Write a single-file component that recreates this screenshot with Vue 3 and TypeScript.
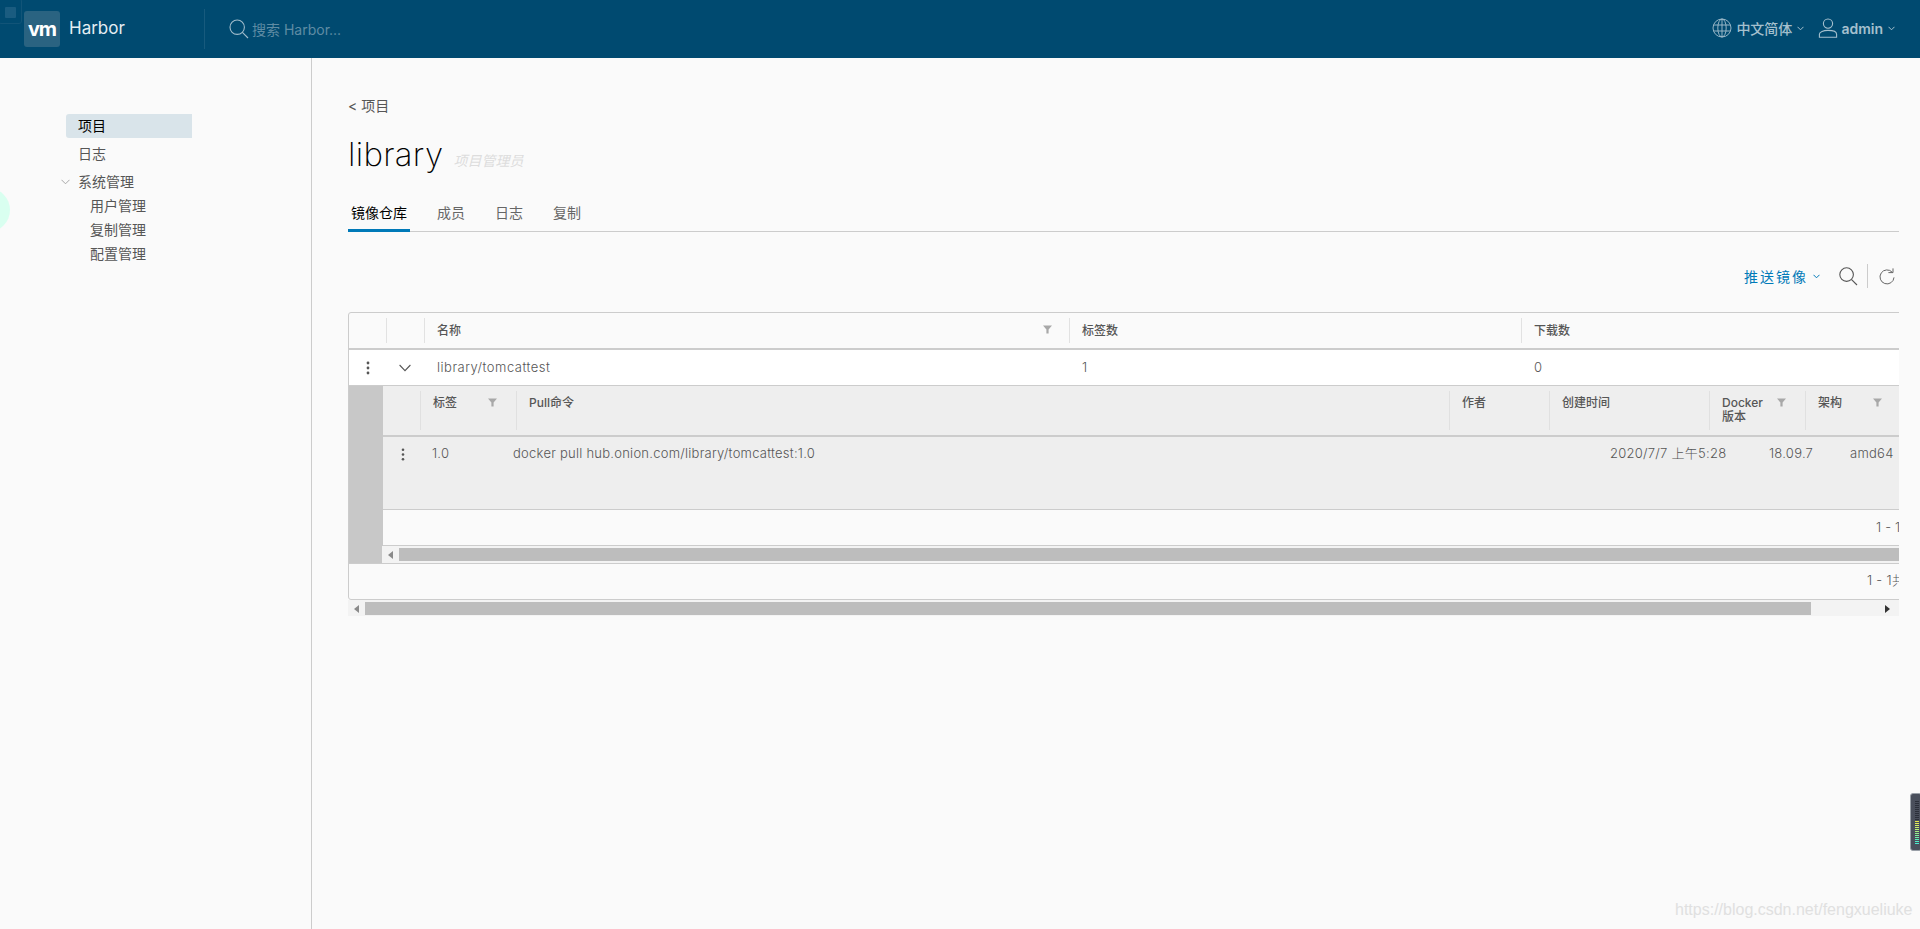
<script setup lang="ts">
interface Col { label: string; filter?: boolean }

const outerHead: Col[] = [
  { label: '' },
  { label: '' },
  { label: '名称', filter: true },
  { label: '标签数' },
  { label: '下载数' },
]
const outerRow = ['library/tomcattest', '1', '0']
const innerHead: Col[] = [
  { label: '' },
  { label: '标签', filter: true },
  { label: 'Pull命令' },
  { label: '作者' },
  { label: '创建时间' },
  { label: 'Docker 版本', filter: true },
  { label: '架构', filter: true },
]
const innerRow = ['1.0', 'docker pull hub.onion.com/library/tomcattest:1.0', '2020/7/7 上午5:28', '18.09.7', 'amd64']

const meterColors: string[] = [
  ...Array(10).fill('#2b2f3a'),
  '#e8e84a', '#e4ea58', '#d6ec62', '#c8ee6c', '#b8f076', '#a6f080', '#94f08c', '#82f09a', '#70f0a8', '#5eeeb6', '#50ecc4', '#48ead0',
]
</script>

<template>
  <div class="page">
    <header class="topbar">
      <div class="brand">
        <span class="logo">vm</span>
        <span class="brand-name">Harbor</span>
      </div>
      <div class="search">
        <svg class="search-icon" width="20" height="20" viewBox="0 0 20 20" fill="none" stroke="currentColor" stroke-width="1.1">
          <circle cx="8.2" cy="8.2" r="7.2" />
          <path d="M13.4 13.4 L19 19" />
        </svg>
        <span class="placeholder">搜索 Harbor...</span>
      </div>
      <div class="top-right">
        <div class="top-item">
          <svg width="20" height="20" viewBox="0 0 20 20" fill="none" stroke="currentColor" stroke-width="0.9">
            <circle cx="10" cy="10" r="9" />
            <ellipse cx="10" cy="10" rx="4.2" ry="9" />
            <path d="M10 1 V19 M1.6 7 H18.4 M1.6 13 H18.4" />
          </svg>
          <span class="top-label lang">中文简体</span>
          <svg class="caret" width="7" height="5" viewBox="0 0 7 5" fill="none" stroke="currentColor" stroke-width="1"><path d="M0.5 0.8 L3.5 3.8 L6.5 0.8" /></svg>
        </div>
        <div class="top-item user">
          <svg width="20" height="20" viewBox="0 0 20 20" fill="none" stroke="currentColor" stroke-width="1.1">
            <circle cx="10" cy="5.6" r="4.6" />
            <path d="M1.4 19.2 V16.2 C1.4 13.8 5.4 12.4 10 12.4 C14.6 12.4 18.6 13.8 18.6 16.2 V19.2 Z" />
          </svg>
          <span class="top-label admin">admin</span>
          <svg class="caret" width="7" height="5" viewBox="0 0 7 5" fill="none" stroke="currentColor" stroke-width="1"><path d="M0.5 0.8 L3.5 3.8 L6.5 0.8" /></svg>
        </div>
      </div>
    </header>

    <div class="body">
      <aside class="sidebar">
        <nav class="nav">
          <a class="nav-item active">项目</a>
          <a class="nav-item">日志</a>
          <div class="nav-group">
            <svg class="nav-caret" width="9" height="6" viewBox="0 0 9 6" fill="none" stroke="#a8a8a8" stroke-width="1"><path d="M0.5 0.8 L4.5 4.8 L8.5 0.8" /></svg>
            <span>系统管理</span>
          </div>
          <a class="nav-sub">用户管理</a>
          <a class="nav-sub">复制管理</a>
          <a class="nav-sub">配置管理</a>
        </nav>
      </aside>

      <main class="content">
        <div class="crumb">&lt; 项目</div>
        <div class="title-row">
          <h1 class="title">library</h1>
          <span class="role">项目管理员</span>
        </div>
        <div class="tabs">
          <a class="tab active">镜像仓库</a>
          <a class="tab">成员</a>
          <a class="tab">日志</a>
          <a class="tab">复制</a>
        </div>

        <div class="toolbar">
          <span class="push">推送镜像</span>
          <svg class="push-caret" width="7" height="5" viewBox="0 0 7 5" fill="none" stroke="#0079b8" stroke-width="1"><path d="M0.5 0.8 L3.5 3.8 L6.5 0.8" /></svg>
          <svg class="tool-search" width="19" height="19" viewBox="0 0 19 19" fill="none" stroke="#565656" stroke-width="1.1">
            <circle cx="7.6" cy="7.6" r="6.8" />
            <path d="M12.6 12.6 L18 18" />
          </svg>
          <span class="tool-div"></span>
          <svg class="tool-refresh" width="16" height="17" viewBox="0 0 16 17" fill="none" stroke="#666" stroke-width="1">
            <path d="M13.2 4.2 A7 7 0 1 0 15 9.4" />
            <path d="M9.4 4.6 H14 V0.4" />
          </svg>
        </div>

        <div class="grid-wrap">
          <div class="grid">
            <div class="outer-cols outer-head">
              <div v-for="(c, i) in outerHead" :key="i" class="hcell">
                <span>{{ c.label }}</span>
                <svg v-if="c.filter" class="funnel" width="9" height="9" viewBox="0 0 9 9"><path d="M0 0.5 H9 L5.6 4.4 V8.5 H3.4 V4.4 Z" fill="#a8a8a8" /></svg>
              </div>
            </div>
            <div class="outer-cols outer-row">
              <div class="rcell icon-cell">
                <svg width="4" height="14" viewBox="0 0 4 14" fill="#565656"><circle cx="2" cy="2" r="1.4" /><circle cx="2" cy="7" r="1.4" /><circle cx="2" cy="12" r="1.4" /></svg>
              </div>
              <div class="rcell icon-cell">
                <svg width="12" height="8" viewBox="0 0 12 8" fill="none" stroke="#565656" stroke-width="1.1"><path d="M0.6 1 L6 6.6 L11.4 1" /></svg>
              </div>
              <div v-for="(t, i) in outerRow" :key="i" class="rcell">{{ t }}</div>
            </div>

            <div class="detail">
              <div class="detail-side"></div>
              <div class="detail-main">
                <div class="inner-cols inner-head">
                  <div v-for="(c, i) in innerHead" :key="i" class="ihcell" :class="{ first: i === 0 }">
                    <span class="ih-label">{{ c.label }}</span>
                    <svg v-if="c.filter" class="funnel" width="9" height="9" viewBox="0 0 9 9"><path d="M0 0.5 H9 L5.6 4.4 V8.5 H3.4 V4.4 Z" fill="#a8a8a8" /></svg>
                  </div>
                </div>
                <div class="inner-row-cols inner-row">
                  <div class="ircell kebab-cell">
                    <svg width="4" height="13" viewBox="0 0 4 13" fill="#565656"><circle cx="2" cy="1.7" r="1.3" /><circle cx="2" cy="6.5" r="1.3" /><circle cx="2" cy="11.3" r="1.3" /></svg>
                  </div>
                  <div v-for="(t, i) in innerRow" :key="i" class="ircell">{{ t }}</div>
                </div>
                <div class="inner-foot">1 - 1</div>
              </div>
            </div>
            <div class="inner-bar">
              <div class="bar-side"></div>
              <div class="scroll scroll-inner">
                <span class="arrow"><svg width="5" height="8" viewBox="0 0 5 8"><path d="M5 0 V8 L0 4 Z" fill="#8a8a8a" /></svg></span>
                <span class="thumb grow"></span>
              </div>
            </div>
            <div class="outer-foot">1 - 1共计 1 条记录</div>
          </div>
          <div class="scroll scroll-outer">
            <span class="arrow"><svg width="5" height="8" viewBox="0 0 5 8"><path d="M5 0 V8 L0 4 Z" fill="#8a8a8a" /></svg></span>
            <span class="thumb fixed"></span>
            <span class="arrow right"><svg width="5" height="8" viewBox="0 0 5 8"><path d="M0 0 V8 L5 4 Z" fill="#333" /></svg></span>
          </div>
        </div>
      </main>
    </div>

    <!-- overlays from other software sitting over the page -->
    <div class="ov-square"><span></span></div>
    <div class="ov-circle"></div>
    <div class="ov-meter">
      <i v-for="(c, i) in meterColors" :key="i" :style="{ background: c }"></i>
    </div>
    <div class="ov-mark">https://blog.csdn.net/fengxueliuke</div>
  </div>
</template>

<style>
html, body { margin: 0; padding: 0; background: #fafafa; overflow: hidden; }
</style>

<style scoped>
.page {
  position: relative;
  display: flex;
  flex-direction: column;
  height: 929px;
  overflow: hidden;
  background: #fafafa;
  color: #565656;
  font-family: Inter, "Noto Sans CJK SC", sans-serif;
  font-size: 13px;
}

/* header */
.topbar {
  flex: 0 0 58px;
  display: flex;
  align-items: center;
  background: #004a70;
  color: #fafafa;
}
.brand {
  width: 180px;
  height: 40px;
  padding-left: 24px;
  display: flex;
  align-items: center;
  border-right: 1px solid #175a7d;
}
.logo {
  width: 36px;
  height: 36px;
  display: flex;
  align-items: center;
  justify-content: center;
  background: #2a6381;
  border-radius: 3px;
  color: #fff;
  font-size: 20px;
  font-weight: 700;
  letter-spacing: -1px;
  line-height: 32px;
}
.brand-name {
  margin-left: 9px;
  padding-bottom: 3px;
  font-size: 17px;
  color: #e4eef3;
}
.search {
  display: flex;
  align-items: center;
  margin-left: 24px;
  color: #a0bccb;
}
.search-icon { margin-right: 3px; }
.placeholder {
  font-size: 14px;
  color: #5f8ca4;
}
.top-right {
  margin-left: auto;
  display: flex;
  align-items: center;
  color: #a5c0ce;
  padding: 0 25px 2px 0;
}
.top-item {
  display: flex;
  align-items: center;
}
.top-item.user { margin-left: 14px; }
.top-label {
  font-size: 14px;
  font-weight: 500;
  margin-left: 4px;
  margin-right: 5px;
}
.top-label.admin {
  font-weight: 600;
  margin-left: 3px;
}
.caret { margin-top: 1px; }

/* side */
.body {
  flex: 1;
  display: flex;
  min-height: 0;
}
.sidebar {
  flex: none;
  width: 245px;
  border-right: 1px solid #ccc;
  padding: 56px 0 0 66px;
}
.nav {
  width: 126px;
  display: flex;
  flex-direction: column;
  color: #565656;
  font-size: 14px;
}
.nav-item {
  height: 24px;
  line-height: 23px;
  padding-left: 12px;
  margin-bottom: 4px;
  border-radius: 3px 0 0 3px;
}
.nav-item.active {
  background: #d9e4ea;
  color: #000;
}
.nav-group {
  height: 24px;
  line-height: 22px;
  display: flex;
  align-items: center;
  margin-left: -5px;
}
.nav-caret { margin-right: 8px; }
.nav-sub {
  height: 24px;
  line-height: 23px;
  padding-left: 24px;
}

/* content */
.content {
  flex: 1;
  min-width: 0;
  padding: 0 21px 0 36px;
}
.crumb {
  height: 20px;
  line-height: 20px;
  margin-top: 38px;
  font-size: 14px;
  color: #565656;
}
.title-row {
  display: flex;
  align-items: baseline;
  height: 46px;
  margin-top: 15px;
}
.title {
  margin: 0;
  font-size: 33px;
  font-weight: 200;
  letter-spacing: 0.3px;
  color: #000;
  line-height: 46px;
}
.role {
  margin-left: 10px;
  font-size: 14px;
  font-style: italic;
  color: #ddd;
}
.tabs {
  display: flex;
  height: 36px;
  margin-top: 18px;
  border-bottom: 1px solid #ccc;
}
.tab {
  padding: 0 3px;
  margin-right: 24px;
  height: 36px;
  line-height: 36px;
  font-size: 14px;
  color: #666;
  box-sizing: border-box;
}
.tab.active {
  color: #000;
  border-bottom: 3px solid #0079b8;
  height: 37px;
}

.toolbar {
  display: flex;
  align-items: center;
  justify-content: flex-end;
  height: 24px;
  margin-top: 32px;
  padding-right: 4px;
}
.push {
  color: #0079b8;
  font-size: 14px;
  letter-spacing: 2px;
}
.push-caret { margin-left: 5px; margin-right: 19px; }
.tool-div {
  width: 1px;
  height: 24px;
  background: #ccc;
  margin: 0 11px 0 9px;
}

/* datagrid */
.grid-wrap {
  margin-top: 24px;
  overflow: hidden;
}
.grid {
  width: 1640px;
  border: 1px solid #ccc;
  border-radius: 3px;
  box-sizing: border-box;
  background: #fafafa;
}
.outer-cols {
  display: grid;
  grid-template-columns: 37px 38px 645px 452px 1fr;
}
.outer-head {
  height: 35px;
  border-bottom: 2px solid #ccc;
}
.hcell {
  display: flex;
  align-items: center;
  justify-content: space-between;
  margin: 5px 0;
  border-left: 1px solid #e2e2e2;
  padding: 0 17px 2px 12px;
  font-size: 12px;
  font-weight: 500;
}
.hcell:first-child { border-left: 0; }
.outer-row {
  height: 35px;
  background: #fff;
  border-bottom: 1px solid #ccc;
}
.rcell {
  display: flex;
  align-items: center;
  padding: 0 0 1px 13px;
  font-weight: 300;
  letter-spacing: 0.5px;
}
.icon-cell {
  padding: 0;
  justify-content: center;
}
.detail { display: flex; }
.detail-side {
  width: 34px;
  flex: none;
  background: #c8c8c8;
}
.detail-main { flex: 1; min-width: 0; }
.inner-cols {
  display: grid;
  grid-template-columns: 37px 96px 933px 100px 160px 96px 96px;
}
.inner-head {
  height: 49px;
  background: #eee;
  border-bottom: 2px solid #ccc;
}
.ihcell {
  display: flex;
  align-items: flex-start;
  justify-content: space-between;
  margin: 5px 0;
  padding: 5px 19px 0 12px;
  border-left: 1px solid #e0e0e0;
  font-size: 12px;
  font-weight: 500;
  line-height: 14px;
}
.ihcell.first { border-left: 0; }
.ih-label { width: 48px; flex: none; }
.ihcell:nth-child(3) .ih-label,
.ihcell:nth-child(4) .ih-label,
.ihcell:nth-child(5) .ih-label { width: auto; }
.ihcell .funnel { margin-top: 2px; flex: none; }
.inner-row-cols {
  display: grid;
  grid-template-columns: 37px 81px 1097px 159px 81px 1fr;
}
.inner-row {
  height: 72px;
  background: #eee;
  border-bottom: 1px solid #ccc;
}
.ircell {
  padding: 4px 0 0 12px;
  line-height: 24px;
  white-space: nowrap;
  font-weight: 300;
  letter-spacing: 0.25px;
}
.kebab-cell {
  padding: 11px 0 0 18px;
  line-height: 0;
}
.inner-foot {
  height: 35px;
  line-height: 35px;
  padding-left: 1493px;
  border-bottom: 1px solid #ccc;
  white-space: nowrap;
  font-weight: 300;
  letter-spacing: 0.2px;
}
.inner-bar {
  display: flex;
  height: 17px;
  border-bottom: 1px solid #ccc;
}
.bar-side {
  width: 34px;
  flex: none;
  background: #c8c8c8;
}
.scroll {
  display: flex;
  align-items: flex-start;
  background: #f3f3f3;
  box-sizing: border-box;
  padding-top: 2px;
}
.scroll-inner {
  flex: 1;
  margin-left: -1px;
}
.scroll-outer {
  width: 100%;
  height: 16px;
}
.arrow {
  width: 17px;
  height: 13px;
  flex: none;
  display: flex;
  align-items: center;
  justify-content: center;
  line-height: 0;
}
.thumb {
  height: 13px;
  background: #bdbdbd;
}
.thumb.grow { flex: 1; }
.thumb.fixed { width: 1446px; }
.arrow.right { margin-left: auto; margin-right: 3px; }
.outer-foot {
  height: 35px;
  line-height: 33px;
  padding-left: 1518px;
  white-space: nowrap;
  font-weight: 300;
  letter-spacing: 0.3px;
}

/* overlays */
.ov-square {
  position: absolute;
  left: -2px;
  top: -2px;
  width: 24px;
  height: 26px;
  border: 1px solid #115478;
  border-radius: 3px;
  box-sizing: border-box;
}
.ov-square span {
  position: absolute;
  left: 6px;
  top: 8px;
  width: 11px;
  height: 11px;
  background: #1a5c80;
  border-radius: 1px;
}
.ov-circle {
  position: absolute;
  left: -34px;
  top: 188px;
  width: 44px;
  height: 44px;
  border-radius: 50%;
  background: #d9fff0;
}
.ov-meter {
  position: absolute;
  left: 1910px;
  top: 793px;
  width: 12px;
  height: 58px;
  padding: 7px 0 0 4px;
  box-sizing: border-box;
  background: #4a4f5c;
  border: 1px solid #9aa0a8;
  border-radius: 3px;
  display: flex;
  flex-direction: column;
  gap: 1px;
}
.ov-meter i {
  display: block;
  width: 4px;
  height: 1px;
  flex: none;
}
.ov-mark {
  position: absolute;
  left: 1675px;
  top: 900px;
  font-family: "Liberation Sans", sans-serif;
  font-size: 16px;
  line-height: 20px;
  color: #e0e0e0;
  white-space: nowrap;
}
</style>
